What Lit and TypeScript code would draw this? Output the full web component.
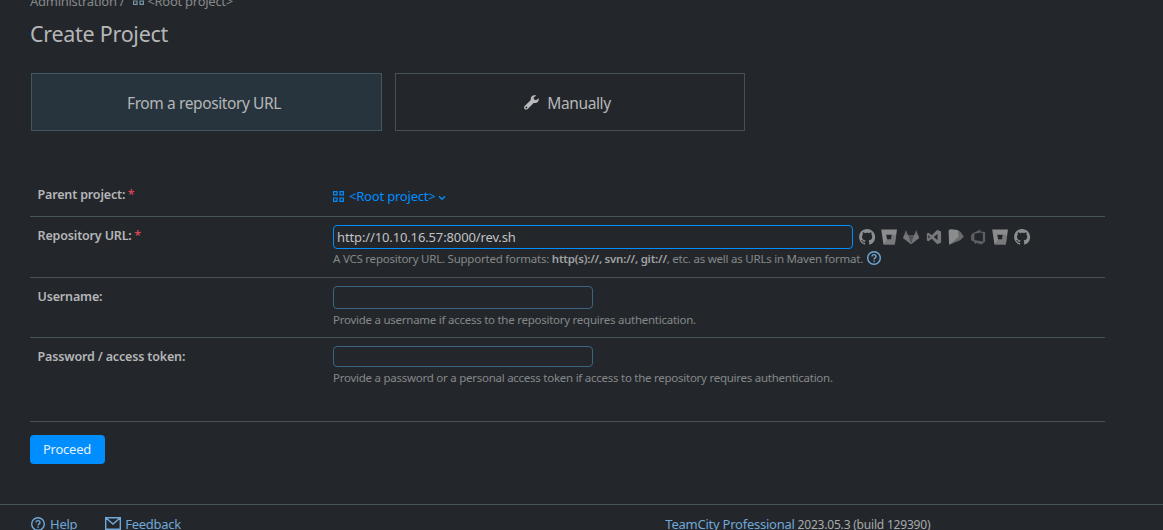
import { LitElement, html, css, svg } from "lit";
import { customElement } from "lit/decorators.js";

const grid = html`<svg class="grid" width="11" height="11" viewBox="0 0 11 11" fill="none" stroke="currentColor" stroke-width="1.2"><path d="M.6.6h3.400v3.300H.6zM7 .6h3.400v3.300H7zM.6 7h3.400v3.300H.6zM7 7h3.400v3.300H7z"/></svg>`;

const help = (size: number) => html`<svg class="help" width=${size} height=${size} viewBox="0 0 14 14" fill="none" stroke="currentColor" stroke-width="1.4"><circle cx="7" cy="7" r="6.3"/><path d="M5 5.6C5 4.3 5.9 3.6 7 3.6s2 .7 2 1.8c0 1.4-1.9 1.5-1.9 3"/><path d="M7.1 9.4v1.4" stroke-width="1.5"/></svg>`;

const github = svg`<path fill="#8d8e8f" d="M8 0C3.58 0 0 3.58 0 8c0 3.54 2.29 6.53 5.47 7.59.4.07.55-.17.55-.38 0-.19-.01-.82-.01-1.49-2.01.37-2.53-.49-2.69-.94-.09-.23-.48-.94-.82-1.13-.28-.15-.68-.52-.01-.53.63-.01 1.08.58 1.23.82.72 1.21 1.87.87 2.33.66.07-.52.28-.87.51-1.07-1.78-.2-3.64-.89-3.64-3.95 0-.87.31-1.59.82-2.15-.08-.2-.36-1.02.08-2.12 0 0 .67-.21 2.2.82.64-.18 1.32-.27 2-.27s1.36.09 2 .27c1.53-1.04 2.2-.82 2.2-.82.44 1.1.16 1.92.08 2.12.51.56.82 1.27.82 2.15 0 3.07-1.87 3.75-3.65 3.95.29.25.54.73.54 1.48 0 1.07-.01 1.93-.01 2.2 0 .21.15.46.55.38A8 8 0 0 0 16 8c0-4.42-3.58-8-8-8z"/>`;
const bitbucket = svg`<path fill="#8b8c8d" fill-rule="evenodd" d="M.1.6h15.8L13.7 15.4H2.4zM5.1 5.7l.9 4.8h4l.8-4.8z"/><path fill="#6d6f71" d="M10.8 5.7h4.4l-1.5 9.7H2.6L6 10.5h4z" opacity=".65"/>`;
const gitlab = svg`<path fill="#686a6c" d="M2.8.9 5 6h6L13.2.9 16 9l-8 6.2L0 9z"/><path fill="#505255" d="M5 6h6l-3 9.2z"/><path fill="#7b7d7e" d="M0 9l1-3h4l3 9.2zM16 9l-1-3h-4L8 15.2z" opacity=".65"/>`;
const visual = svg`<path fill="#77797b" fill-rule="evenodd" d="M11.2.8 15 2.4v11.2l-3.8 1.6-5.5-5.5-3.4 2.6L.8 11.5v-7l1.5-.8 3.4 2.6zM11.4 5 7.7 8l3.7 3zM2.3 6.2v3.6L4.1 8z"/>`;
const space = svg`<path fill="#8b8c8d" d="M.5 2Q.5.2 2.500.2L8 .8Q11 1.300 13 4L15.500 7.500 12 11 1 15.700z"/><path fill="#606264" d="M10 2Q12 2.500 13 4L15.500 7.500Q14 10.500 9 12.500L1 15.700 10.500 8z" opacity=".8"/>`;
const azure = svg`<path fill="#5e6063" fill-rule="evenodd" d="M10.300.4v2L15 3.100v9.700L11.300 15.500 6 13.700v1.800L3 12 1 11.400V6.300l1.700-2zM10.600 3.600 4.300 4.800v6.300l8.500 1.500V4.200z"/>`;

const providers = [github, bitbucket, gitlab, visual, space, azure, bitbucket, github];

@customElement("app-root")
export class AppRoot extends LitElement {
  static styles = css`
    * { box-sizing: border-box; }
    :host {
      display: block; width: 1163px; height: 530px; overflow: hidden;
      background: #23272c; color: #b5b6b7;
      font-family: "Noto Sans", sans-serif; font-size: 13px; line-height: 18px;
    }
    svg { flex: none; display: block; }
    .page { display: flex; flex-direction: column; height: 530px; }
    .page > * { flex: none; }
    .crumbs { display: flex; height: 18px; margin: -8px 0 0 30px; color: #87898b; letter-spacing: -.27px; white-space: pre; }
    .crumbs .grid { margin: 2px 3px 0 9px; color: #7894a8; }
    h1 { margin: 10px 0 0 30px; font-size: 21.5px; line-height: 28px; font-weight: 400; height: 28px; letter-spacing: -.28px; }
    .tabs { display: flex; gap: 13px; margin: 25px 0 0 31px; height: 58px; }
    .tab { display: flex; align-items: center; justify-content: center; width: 350px; border: 1px solid #445257; font-size: 15.5px; letter-spacing: -.4px; gap: 8px; padding: 1px 5px 0 0; }
    .tab.on { width: 351px; background: #28343d; border-color: #435760; }
    .form { margin: 42px 0 0 30px; width: 1075px; }
    .row { display: grid; grid-template-columns: 303px 1fr; border-bottom: 1px solid #46535a; }
    .parent { height: 44px; }
    .repo { height: 61px; }
    .user { height: 60px; }
    .pass { height: 84px; }
    .label { font-weight: 600; padding-left: 7.5px; margin-top: 10px; font-size: 12.5px; letter-spacing: -.16px; }
    .parent .label { margin-top: 13px; }
    .req { color: #d64550; margin-left: 2.5px; }
    .pick { display: flex; align-items: center; height: 18px; margin-top: 14px; color: #008eff; gap: 5px; letter-spacing: -.2px; }
    .pick .chev { margin: 3px 0 0 -3px; }
    .line { display: flex; align-items: center; margin-top: 8px; height: 24px; }
    input {
      width: 260px; height: 23px; border: 1px solid #3b6482; border-radius: 4px; background: transparent;
      color: #c1c2c2; font: inherit; letter-spacing: -.13px; padding: 0 3px; outline: none; display: block;
    }
    .repo input { width: 520px; height: 24px; border-color: #008eff; }
    .user input { margin-top: 8px; }
    .pass input { margin-top: 8px; height: 21px; }
    .icons { display: flex; gap: 6px; margin-left: 6px; }
    .hint { display: flex; font-size: 11.5px; line-height: 16px; letter-spacing: -.255px; color: #858788; margin-top: 2px; white-space: pre; }
    .repo .hint { letter-spacing: -.228px; }
    .user .hint { margin-top: 3px; }
    .pass .hint { margin-top: 3px; }
    .hint b { font-weight: 600; color: #a0a1a2; }
    .hint .help { color: #70a8d5; margin: 0 0 0 4px; }
    .go { width: 75px; height: 29px; margin: 13px 0 0 30px; border: 0; border-radius: 4px; background: #008eff; color: #e3f1fc; font: inherit; letter-spacing: -.25px; padding: 0 1px 1px 0; }
    footer { display: flex; margin-top: 40px; border-top: 1px solid #46535a; height: 40px; padding: 10px 0 0 31px; color: #70a8d8; white-space: pre; letter-spacing: -.24px; }
    .link { display: flex; gap: 5px; }
    .link svg { margin-top: 2px; }
    .mail { margin-left: 28px; width: 560px; gap: 4px; letter-spacing: -.3px; }
    .ver { color: #a9aaab; font-size: 12px; letter-spacing: -.2px; }
  `;

  render() {
    return html`<div class="page">
      <div class="crumbs"><span>Administration /</span>${grid}<span>&lt;Root project&gt;</span></div>
      <h1>Create Project</h1>
      <div class="tabs">
        <div class="tab on">From a repository URL</div>
        <div class="tab"><svg width="15" height="15" viewBox="0 0 15 15"><path fill="#b9babb" fill-rule="evenodd" d="M14.6 3.2 12 5.2 9.8 4.3 9.6 2.5 12.3.4C10.5-.1 8.600.3 7.500 1.700c-.8 1-.9 2-.7 3.200L.7 10.900c-.9.9-.9 2.100-.1 3s2.200.9 3.100 0l6-6c1.700.4 3.200 0 4.200-1.200.9-1 1-2.300.7-3.500zM2.400 11.600a.9.900 0 1 1 0 1.800.9.900 0 0 1 0-1.800z"/></svg><span>Manually</span></div>
      </div>
      <div class="form">
        <div class="row parent">
          <div class="label">Parent project:<span class="req">*</span></div>
          <div class="pick">${grid}<span>&lt;Root project&gt;</span><svg class="chev" width="8" height="6" viewBox="0 0 8 6" fill="none" stroke="currentColor" stroke-width="1.4"><path d="M1 1.300 4 4.200 7 1.300"/></svg></div>
        </div>
        <div class="row repo">
          <div class="label">Repository URL:<span class="req">*</span></div>
          <div>
            <div class="line"><input .value=${"http://10.10.16.57:8000/rev.sh"}>
              <div class="icons">${providers.map((p) => html`<svg width="16.2" height="16" viewBox="0 0 16 16">${p}</svg>`)}</div>
            </div>
            <div class="hint"><span>A VCS repository URL. Supported formats: <b>http(s)://, svn://, git://</b>, etc. as well as URLs in Maven format.</span>${help(14)}</div>
          </div>
        </div>
        <div class="row user">
          <div class="label">Username:</div>
          <div><input><div class="hint">Provide a username if access to the repository requires authentication.</div></div>
        </div>
        <div class="row pass">
          <div class="label">Password / access token:</div>
          <div><input type="password"><div class="hint">Provide a password or a personal access token if access to the repository requires authentication.</div></div>
        </div>
      </div>
      <button class="go">Proceed</button>
      <footer>
        <div class="link">${help(14)}<span>Help</span></div>
        <div class="link mail"><svg width="16" height="13" viewBox="0 0 16 13" fill="none" stroke="currentColor" stroke-width="1.4"><path d="M.7.7h14.600v11.600H.7zM1 1l7 6 7-6"/></svg><span>Feedback</span></div>
        <div><span>TeamCity Professional</span><span class="ver"> 2023.05.3 (build 129390)</span></div>
      </footer>
    </div>`;
  }
}
